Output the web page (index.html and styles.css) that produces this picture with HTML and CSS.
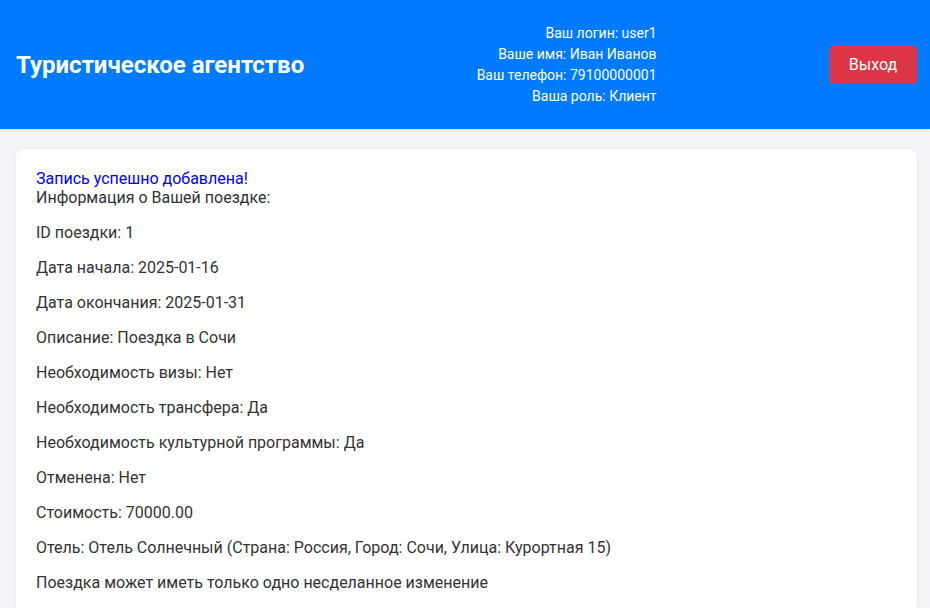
FILE: index.html
```html
<!DOCTYPE html>
<html lang="ru">
<head>
<meta charset="utf-8">
<title>Туристическое агентство</title>
<link rel="stylesheet" href="styles.css">
</head>
<body>
<header class="header">
  <h1 class="title">Туристическое агентство</h1>
  <div class="user-info">
    <div>Ваш логин: user1</div>
    <div>Ваше имя: Иван Иванов</div>
    <div>Ваш телефон: 79100000001</div>
    <div>Ваша роль: Клиент</div>
  </div>
  <button class="logout">Выход</button>
</header>
<main class="card">
  <div class="success">Запись успешно добавлена!</div>
  <div>Информация о Вашей поездке:</div>
  <p>ID поездки: 1</p>
  <p>Дата начала: 2025-01-16</p>
  <p>Дата окончания: 2025-01-31</p>
  <p>Описание: Поездка в Сочи</p>
  <p>Необходимость визы: Нет</p>
  <p>Необходимость трансфера: Да</p>
  <p>Необходимость культурной программы: Да</p>
  <p>Отменена: Нет</p>
  <p>Стоимость: 70000.00</p>
  <p>Отель: Отель Солнечный (Страна: Россия, Город: Сочи, Улица: Курортная 15)</p>
  <p>Поездка может иметь только одно несделанное изменение</p>
</main>
</body>
</html>
```

FILE: styles.css
```css
* { box-sizing: border-box; }
html, body {
  margin: 0;
  padding: 0;
}
body {
  font-family: Roboto, "Noto Sans", "Liberation Sans", sans-serif;
  background: #f3f3f8;
  color: #333;
}
.header {
  height: 129px;
  background: #007bff;
  color: #fff;
  display: flex;
  align-items: center;
  justify-content: space-between;
  padding: 0 13px 0 16px;
  box-shadow: 0 2px 4px rgba(0, 0, 0, 0.08);
}
.title {
  margin: 0;
  font-size: 24px;
  font-weight: 700;
}
.user-info {
  text-align: right;
  font-size: 14px;
  line-height: 21px;
}
.logout {
  background: #dc3545;
  color: #fff;
  border: none;
  border-radius: 5px;
  width: 88px;
  height: 38px;
  font-family: inherit;
  font-size: 16px;
  cursor: pointer;
}
.card {
  margin: 20px 13px 0 16px;
  background: #fff;
  border-radius: 8px;
  padding: 20px 20px 4px;
  font-size: 16px;
  line-height: 19px;
  box-shadow: 0 1px 4px rgba(0, 0, 0, 0.06);
}
.success {
  color: #0000ff;
}
.card p {
  margin: 16px 0;
}
```
